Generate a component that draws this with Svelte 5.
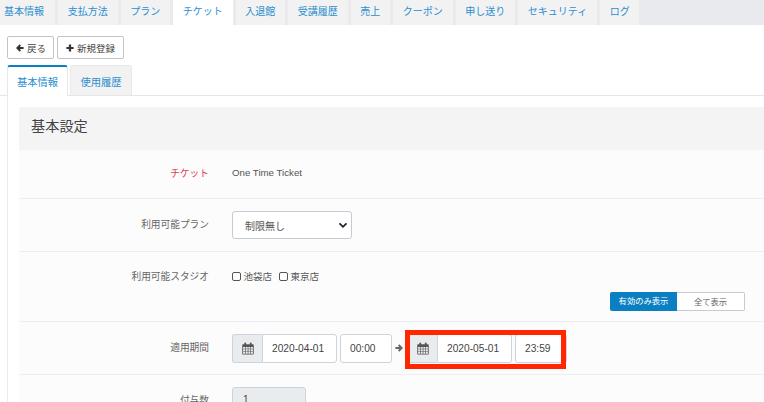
<script>
  const tabs = ['基本情報','支払方法','プラン','チケット','入退館','受講履歴','売上','クーポン','申し送り','セキュリティ','ログ'];
</script>

{#snippet calendar()}
  <svg class="cal" viewBox="0 0 13 14" width="12" height="13" aria-hidden="true">
    <path d="M1 2.500h11a.7.7 0 0 1 .7.7v9.600a.7.7 0 0 1-.7.7H1a.7.7 0 0 1-.7-.7V3.200a.7.7 0 0 1 .7-.7z" fill="#555"/>
    <path d="M1.200 5.500h2.300v1.700H1.200zM4.200 5.500h2v1.700h-2zM6.900 5.500h2v1.700h-2zM9.600 5.500h2.200v1.700H9.600zM1.200 7.900h2.300v1.700H1.200zM4.200 7.900h2v1.700h-2zM6.900 7.900h2v1.700h-2zM9.600 7.900h2.200v1.700H9.600zM1.200 10.300h2.300v2.300H1.200zM4.200 10.300h2v2.300h-2zM6.900 10.300h2v2.300h-2zM9.600 10.300h2.200v2.300H9.600z" fill="#e9ecef"/>
    <rect x="2.600" y="0.500" width="1.800" height="3.500" rx=".8" fill="#555"/>
    <rect x="8.600" y="0.500" width="1.800" height="3.500" rx=".8" fill="#555"/>
  </svg>
{/snippet}

{#snippet arrowLeft()}
  <svg viewBox="0 0 10 10" width="8" height="8" aria-hidden="true">
    <path d="M9.500 5H2M5.400 1.200 1.600 5l3.800 3.800" fill="none" stroke="currentColor" stroke-width="2.400"/>
  </svg>
{/snippet}

{#snippet arrowRight()}
  <svg viewBox="0 0 10 10" width="8" height="8" aria-hidden="true">
    <path d="M.5 5H8M4.600 1.200 8.400 5 4.600 8.800" fill="none" stroke="currentColor" stroke-width="2.400"/>
  </svg>
{/snippet}

<div class="page">
  <nav class="topnav">
    {#each tabs as t}
      <span class="toptab" class:active={t === 'チケット'}>{t}</span>
    {/each}
  </nav>

  <div class="actions">
    <button class="btn back">{@render arrowLeft()}戻る</button>
    <button class="btn">
      <svg viewBox="0 0 10 10" width="8" height="8" aria-hidden="true"><path d="M5 .5v9M.5 5h9" stroke="currentColor" stroke-width="2.800"/></svg>新規登録
    </button>
  </div>

  <div class="subtabs">
    <span class="subtab active">基本情報</span>
    <span class="subtab">使用履歴</span>
  </div>

  <div class="content">
    <section class="card">
      <h2>基本設定</h2>

      <div class="row r1">
        <div class="label req">チケット</div>
        <div class="value">One Time Ticket</div>
      </div>

      <div class="row r2">
        <div class="label">利用可能プラン</div>
        <div class="value">
          <div class="select">制限無し
            <svg viewBox="0 0 10 8" width="10" height="7" aria-hidden="true"><path d="M1 1.500 5 5.500 9 1.500" fill="none" stroke="#222" stroke-width="2"/></svg>
          </div>
        </div>
      </div>

      <div class="row r3">
        <div class="label">利用可能スタジオ</div>
        <div class="value checks">
          <label><span class="box"></span>池袋店</label>
          <label><span class="box"></span>東京店</label>
        </div>
        <div class="toggle">
          <span class="on">有効のみ表示</span><span class="off">全て表示</span>
        </div>
      </div>

      <div class="row r4">
        <div class="label">適用期間</div>
        <div class="value period">
          <div class="datetime">
            <span class="addon">{@render calendar()}</span><span class="field date">2020-04-01</span>
          </div>
          <span class="field time">00:00</span>
          <span class="sep">{@render arrowRight()}</span>
          <div class="datetime">
            <span class="addon">{@render calendar()}</span><span class="field date">2020-05-01</span>
          </div>
          <span class="field time">23:59</span>
        </div>
      </div>

      <div class="row r5">
        <div class="label">付与数</div>
        <div class="value"><div class="number">1</div></div>
      </div>
    </section>
  </div>

  <div class="highlight"></div>
</div>

<style>
  :global(body) {
    margin: 0;
    background: #fff;
    overflow: hidden;
  }
  .page {
    position: relative;
    width: 764px;
    height: 402px;
    overflow: hidden;
    font-family: "Liberation Sans", "Noto Sans CJK JP", sans-serif;
    font-size: 10px;
    color: #555;
  }
  .topnav {
    display: flex;
    gap: 3px;
    height: 25px;
    background: #e9eaee;
  }
  .toptab {
    padding: 0 9.75px;
    line-height: 23px;
    font-size: 10px;
    color: #2b8fcf;
    background: #f2f2f2;
    white-space: nowrap;
  }
  .toptab:first-child { padding-left: 4px; padding-right: 11px; }
  .toptab.active { background: #fff; }
  .actions {
    display: flex;
    gap: 3px;
    padding: 11px 0 0 7px;
  }
  .btn {
    display: flex;
    align-items: center;
    justify-content: center;
    gap: 3px;
    height: 23px;
    padding: 0 8px;
    border: 1px solid #c4c4c4;
    border-radius: 2px;
    background: #fff;
    color: #444;
    font: inherit;
    font-size: 9.5px;
  }
  .btn.back { padding-right: 7px; }
  .btn svg { color: #333; }
  .subtabs {
    display: flex;
    gap: 2px;
    margin-top: 6px;
    padding-left: 7px;
    height: 30px;
    border-bottom: 1px solid #e6e6e6;
    box-sizing: content-box;
  }
  .subtab {
    box-sizing: border-box;
    width: 62px;
    height: 30px;
    text-align: center;
    line-height: 33px;
    font-size: 10.3px;
    color: #2b8fcf;
    background: #f2f2f2;
    border: 1px solid #e8e8e8;
    border-bottom: 0;
    border-radius: 3px 3px 0 0;
  }
  .subtab.active {
    width: 61px;
    height: 31px;
    background: #fff;
    border-top: 2px solid #0a7fc2;
    line-height: 31px;
    position: relative;
    z-index: 1;
  }
  .content {
    margin-left: 7px;
    border-left: 1px solid #ebebeb;
    padding: 11px 0 0 11px;
  }
  .card {
    background: #fcfcfc;
    border-radius: 3px 0 0 0;
  }
  h2 {
    margin: 0;
    height: 43px;
    padding-left: 12px;
    background: #f4f4f4;
    font-size: 14.2px;
    font-weight: 400;
    line-height: 38px;
    color: #444;
    border-radius: 3px 0 0 0;
  }
  .row {
    display: grid;
    grid-template-columns: 190px 1fr;
    column-gap: 23px;
    align-items: center;
    border-bottom: 1px solid #eceef5;
    box-sizing: border-box;
  }
  .r1 { height: 49px; padding-bottom: 3px; }
  .r2 { height: 53px; }
  .r3 { height: 70px; align-items: start; padding-top: 17px; position: relative; }
  .r4 { height: 53px; }
  .r5 { height: 53px; align-items: start; padding-top: 12px; }
  .label { text-align: right; color: #666; font-size: 9.7px; }
  .r2 .label, .r4 .label { padding-bottom: 2px; }
  .req { color: #e03a52; }
  .r5 .label { padding-top: 6px; }
  .value { color: #555; font-size: 9.7px; }
  .select {
    box-sizing: border-box;
    width: 120px;
    height: 28px;
    padding: 0 3px 0 12px;
    display: flex;
    align-items: center;
    justify-content: space-between;
    border: 1px solid #c6cad3;
    border-radius: 3px;
    background: #fff;
    font-size: 10px;
  }
  .checks { display: flex; gap: 7px; font-size: 9.5px; }
  .checks label { display: flex; align-items: center; gap: 2.500px; }
  .box {
    box-sizing: border-box;
    width: 9px;
    height: 9px;
    border: 1px solid #555;
    border-radius: 2px;
    background: #fff;
  }
  .toggle {
    position: absolute;
    top: 40px;
    right: 19px;
    display: flex;
    height: 19px;
    font-size: 8.3px;
    line-height: 18px;
    text-align: center;
  }
  .toggle .on {
    width: 67px;
    background: #0a7fc2;
    color: #fff;
    border-radius: 2px 0 0 2px;
  }
  .toggle .off {
    box-sizing: border-box;
    width: 68px;
    border: 1px solid #c6cad3;
    border-left: 0;
    border-radius: 0 2px 2px 0;
    background: #fff;
    color: #666;
  }
  .period { display: flex; align-items: center; }
  .datetime { display: flex; }
  .addon {
    box-sizing: border-box;
    display: flex;
    align-items: center;
    justify-content: center;
    width: 30px;
    height: 29px;
    background: #e9ecef;
    border: 1px solid #ced4da;
    border-right: 0;
    border-radius: 3px 0 0 3px;
  }
  .field {
    box-sizing: border-box;
    display: flex;
    align-items: center;
    padding-left: 9px;
    height: 29px;
    background: #fff;
    border: 1px solid #ced4da;
    border-radius: 3px;
    font-size: 10.2px;
    color: #444;
  }
  .date { width: 75px; border-radius: 0 3px 3px 0; }
  .time { width: 52px; margin-left: 3px; }
  .sep { width: 15px; padding-left: 3px; box-sizing: border-box; display: flex; color: #666; }
  .number {
    box-sizing: border-box;
    width: 74px;
    height: 30px;
    padding: 6px 0 0 10px;
    background: #e9ecef;
    border: 1px solid #ced4da;
    border-radius: 3px;
    color: #444;
    font-size: 10.2px;
  }
  .highlight {
    position: absolute;
    left: 405px;
    top: 330px;
    width: 161px;
    height: 39px;
    box-sizing: border-box;
    border: 5px solid #ff2600;
  }
</style>
